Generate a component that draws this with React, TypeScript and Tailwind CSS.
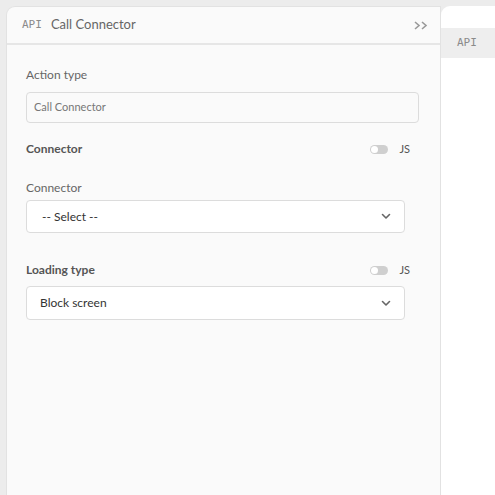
import React from "react";

const Toggle = () => (
  <div className="flex items-center gap-[11px]">
    <div className="relative h-[9px] w-[18px] rounded-full bg-[#cfcfcf]">
      <div className="absolute left-[1px] top-[1px] h-[7px] w-[7px] rounded-full bg-white" />
    </div>
    <span className="text-[11px] text-[#555]">JS</span>
  </div>
);

const Chevron = () => (
  <svg width="10" height="7" viewBox="0 0 10 7" fill="none">
    <path d="M1.5 1.5 L5 5 L8.5 1.5" stroke="#666" strokeWidth="1.6" strokeLinecap="round" strokeLinejoin="round" />
  </svg>
);

export default function App() {
  return (
    <div
      className="flex h-[495px] w-[495px] overflow-hidden bg-[#ececec] pl-[6px] pt-[6px]"
      style={{ fontFamily: "Lato, 'Noto Sans', sans-serif" }}
    >
      <div className="flex w-[435px] shrink-0 flex-col rounded-tl-[9px] border-l border-r border-t border-[#e2e2e2] bg-[#fafafa]">
        <div className="flex h-[38px] items-center border-b-[2px] border-[#e6e6e6] pl-[15px] pr-[12px]">
          <span className="text-[11px] text-[#8a8a8a]" style={{ fontFamily: "'DejaVu Sans Mono', monospace" }}>
            API
          </span>
          <span className="ml-[9px] text-[13px] text-[#666]">Call Connector</span>
          <svg className="ml-auto" width="14" height="9" viewBox="0 0 14 9" fill="none">
            <path d="M1 1 L5 4.5 L1 8" stroke="#999" strokeWidth="1.6" />
            <path d="M8 1 L12 4.5 L8 8" stroke="#999" strokeWidth="1.6" />
          </svg>
        </div>
        <div className="flex flex-col pl-[19px] pr-[20px] pt-[22px]">
          <div className="text-[12px] leading-[15px] text-[#666]">Action type</div>
          <div className="mt-[10px] flex h-[31px] w-[393px] items-center rounded-[4px] border border-[#dcdcdc] bg-[#fafafa] pl-[7px] text-[11px] text-[#777]">
            Call Connector
          </div>
          <div className="mt-[17px] flex w-[384px] items-center justify-between">
            <span className="text-[12px] font-bold text-[#555]">Connector</span>
            <Toggle />
          </div>
          <div className="mt-[22px] text-[12px] leading-[15px] text-[#666]">Connector</div>
          <div className="mt-[5px] flex h-[33px] w-[379px] items-center justify-between rounded-[4px] border border-[#dcdcdc] bg-white pl-[15px] pr-[13px] text-[12px] text-[#333]">
            <span>-- Select --</span>
            <Chevron />
          </div>
          <div className="mt-[28px] flex w-[384px] items-center justify-between">
            <span className="text-[12px] font-bold text-[#555]">Loading type</span>
            <Toggle />
          </div>
          <div className="mt-[7px] flex h-[34px] w-[379px] items-center justify-between rounded-[4px] border border-[#dcdcdc] bg-white pl-[13px] pr-[13px] text-[12px] text-[#333]">
            <span>Block screen</span>
            <Chevron />
          </div>
        </div>
      </div>
      <div className="flex flex-1 flex-col rounded-tl-[9px] bg-white">
        <div className="mt-[22px] flex h-[30px] items-center bg-[#eeeeee] pl-[16px]">
          <span className="text-[11px] text-[#8a8a8a]" style={{ fontFamily: "'DejaVu Sans Mono', monospace" }}>
            API
          </span>
        </div>
      </div>
    </div>
  );
}
